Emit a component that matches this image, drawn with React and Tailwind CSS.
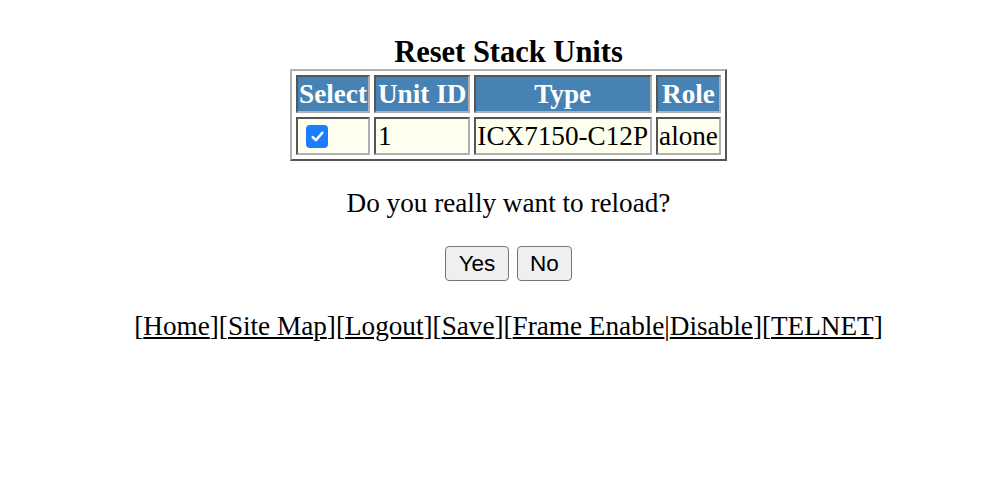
export default function App() {
  const links = ['Home', 'Site Map', 'Logout', 'Save'];
  const cell = 'border-2 border-t-[#555] border-l-[#555] border-r-[#b0b0b0] border-b-[#b0b0b0] px-[1.5px] py-[1.5px]';
  return (
    <div className="min-h-[497px] w-full bg-white text-black" style={{ fontFamily: '"Liberation Serif", "Times New Roman", serif' }}>
      <div className="flex flex-col items-center pl-[18px] pt-[35px]">
        <h3 className="text-[30.5px] font-bold leading-[34px]">Reset Stack Units</h3>
        <table className="border-separate border-2 border-t-[#b0b0b0] border-l-[#b0b0b0] border-r-[#555] border-b-[#555] text-[27.2px] leading-[31px] [border-spacing:4px]">
          <thead>
            <tr>
              {['Select', 'Unit ID', 'Type', 'Role'].map((h) => (
                <th key={h} className={`${cell} bg-[#4682b4] text-center font-bold text-white`}>
                  {h}
                </th>
              ))}
            </tr>
          </thead>
          <tbody>
            <tr>
              <td className={`${cell} bg-[#fffff0] text-left`}>
                <span className="ml-[7px] inline-flex h-[23px] w-[22px] -translate-y-[2px] items-center justify-center rounded-[4px] bg-[#1b7dff] align-middle">
                  <svg viewBox="0 0 16 16" className="h-[17px] w-[17px]">
                    <path d="M3.5 8.5 L6.5 11.5 L12.5 4.5" fill="none" stroke="white" strokeWidth="2.4" strokeLinecap="round" strokeLinejoin="round" />
                  </svg>
                </span>
              </td>
              <td className={`${cell} bg-[#fffff0] text-left`}>1</td>
              <td className={`${cell} bg-[#fffff0] text-left`}>ICX7150-C12P</td>
              <td className={`${cell} bg-[#fffff0] text-left`}>alone</td>
            </tr>
          </tbody>
        </table>
        <p className="mt-[27px] text-[27.2px] leading-[31px]">Do you really want to reload?</p>
        <div className="mt-[27px] flex gap-[8px]" style={{ fontFamily: '"Liberation Sans", Arial, sans-serif' }}>
          <button className="h-[35px] w-[64px] rounded-[4px] border border-[#767676] bg-[#efefef] text-[22.5px]">Yes</button>
          <button className="h-[35px] w-[55px] rounded-[4px] border border-[#767676] bg-[#efefef] text-[22.5px]">No</button>
        </div>
        <div className="mt-[30px] text-[27.2px] leading-[31px]">
          {links.map((l) => (
            <span key={l}>[<a href="#" className="underline">{l}</a>]</span>
          ))}
          <span>[<a href="#" className="underline">Frame Enable</a>|<a href="#" className="underline">Disable</a>]</span>
          <span>[<a href="#" className="underline">TELNET</a>]</span>
        </div>
      </div>
    </div>
  );
}
